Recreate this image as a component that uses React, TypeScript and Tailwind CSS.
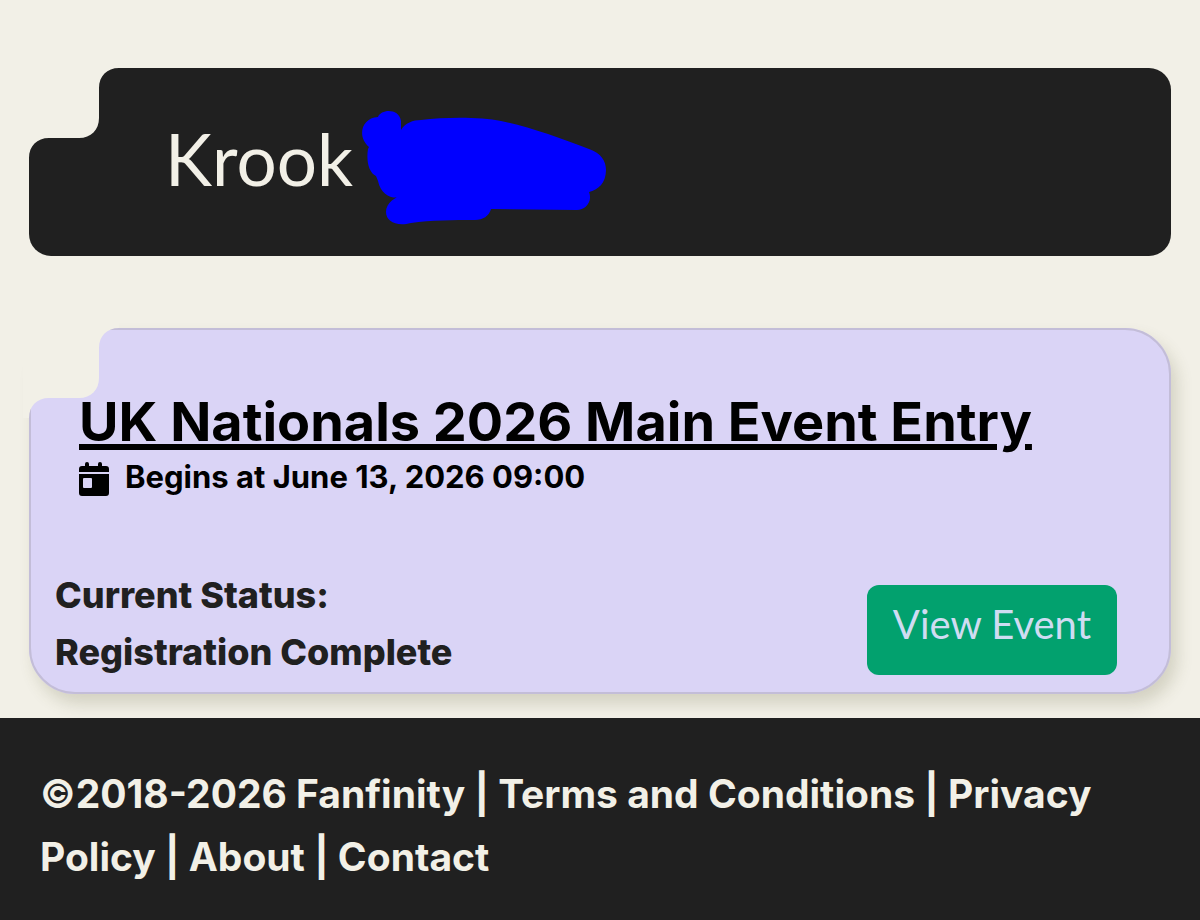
import React, { FunctionComponent } from 'react';

const footerLinks = ["Terms and Conditions", "Privacy Policy", "About", "Contact"];

// Page-coloured step that covers the top left corner of a panel
const Notch: FunctionComponent = () => (
    <svg
    aria-hidden="true"
    viewBox="-6 -6 96 96"
    className="absolute -left-[6px] -top-[6px] w-24 h-24 text-[#f2f0e7]">
        <path
        fill="currentColor"
        d="M-6 -6H90V0C78 0 70 8 70 20V50C70 62 62 70 50 70H20C8 70 0 78 0 90H-6Z"/>
    </svg>
);

const Scribble: FunctionComponent = () => (
    <svg aria-hidden="true" viewBox="0 0 246 114" className="w-[246px] h-[114px] shrink-0">
        <path
        fill="#0000ff"
        d="M8 36C-4 26 0 7 17 6C20 -2 38 -3 40 10V19C44 12 52 9 60 9C85 6 120 6 140 10C165 15 200 27 228 38C240 42 245 50 245 59C245 72 237 79 228 81C232 91 224 99 216 99L130 98C128 105 122 109 114 109C92 109 70 109 50 112C35 116 25 110 25 101C25 92 34 85 45 84C36 89 21 88 17 70L15 65C8 62 5 50 7 38Z"/>
    </svg>
);

const CalendarIcon: FunctionComponent = () => (
    <svg aria-hidden="true" viewBox="0 0 30 34" className="w-[30px] h-[34px] mt-1 shrink-0" fill="currentColor">
        <path d="M6 2Q6 0 8 0T10 2V4H19V2Q19 0 21 0T23 2V4H27Q30 4 30 7V10H0V7Q0 4 3 4H6Z"/>
        <path fillRule="evenodd" d="M0 12H30V31Q30 34 27 34H3Q0 34 0 31ZM5 16Q4 16 4 17V25Q4 26 5 26H12Q13 26 13 25V17Q13 16 12 16Z"/>
    </svg>
);

const App: FunctionComponent = () => {
    return (
        <div className="flex flex-col min-h-screen bg-[#f2f0e7] text-[#202020] font-['Inter',sans-serif]">
            <main className="flex flex-col gap-[72px] pt-[68px] px-[29px] pb-6">
                <header className="relative flex flex-row items-start gap-2 pl-[136px] pt-[43px] pb-[31px] rounded-[22px] bg-[#202020]">
                    <Notch/>

                    <h1 className="pt-2 font-['Lato',sans-serif] text-[71px] leading-[80px] text-[#f2f0e7]">Krook</h1>

                    <Scribble/>
                </header>

                <section className="relative rounded-[46px] bg-[#dad4f6] shadow-[6px_10px_16px_rgba(90,90,50,0.2)]">
                    <div className="flex flex-col justify-between min-h-[366px] pt-[62px] pb-[11px] pl-6 pr-[52px] rounded-[46px] border-2 border-[#c3bdd8]">
                        <Notch/>

                        <div className="relative pl-6 text-black">
                            <h2 className="text-[54px] leading-[60px] font-bold whitespace-nowrap">
                                <a href="#event" className="underline decoration-[6px] underline-offset-[3px]">
                                    UK Nationals 2026 Main Event Entry
                                </a>
                            </h2>

                            <p className="flex flex-row items-center gap-4 text-[31px] leading-[50px] font-bold">
                                <CalendarIcon/>
                                Begins at June 13, 2026 09:00
                            </p>
                        </div>

                        <div className="flex flex-row items-center justify-between">
                            <p className="text-[36px] leading-[57px] font-extrabold">
                                Current Status:
                                <br/>
                                Registration Complete
                            </p>

                            <button
                            type="button"
                            className="mt-3 px-[26px] pt-[10px] pb-[22px] rounded-[12px] bg-[#02a16e] font-['Lato',sans-serif] text-[40px] leading-[58px] text-[#cfdcf2]">
                                View Event
                            </button>
                        </div>
                    </div>
                </section>
            </main>

            <footer className="flex-auto px-10 pt-11 pb-6 bg-[#202020] text-[39px] leading-[63px] font-bold text-[#f2f0e7]">
                ©2018-2026 Fanfinity
                {footerLinks.map(link => (
                    <React.Fragment key={link}>
                        {" | "}
                        <a href="#footer">{link}</a>
                    </React.Fragment>
                ))}
            </footer>
        </div>
    );
}

export default App;
